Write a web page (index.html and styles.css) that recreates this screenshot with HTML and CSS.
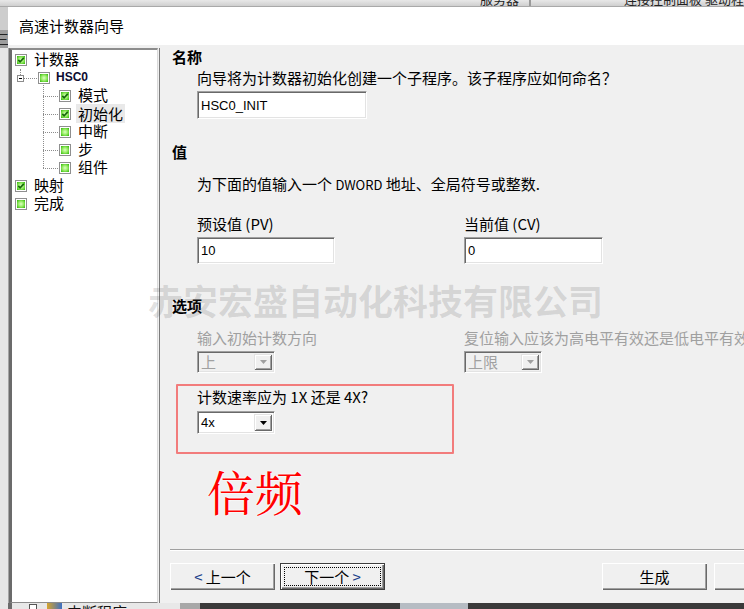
FILE: index.html
```html
<!DOCTYPE html>
<html lang="zh-CN">
<head>
<meta charset="utf-8">
<title>高速计数器向导</title>
<link rel="stylesheet" href="styles.css">
</head>
<body>
<svg class="defs" width="0" height="0" aria-hidden="true">
  <defs>
    <radialGradient id="gg" cx="50%" cy="50%" r="65%">
      <stop offset="0" stop-color="#dcffc4"/>
      <stop offset="0.5" stop-color="#98ec66"/>
      <stop offset="1" stop-color="#3cbc12"/>
    </radialGradient>
  </defs>
</svg>

<div class="topstrip">
  <span class="bgtxt t1">服务器</span>
  <span class="vsep"></span>
  <span class="bgtxt t2">连接控制面板 驱动程序</span>
</div>

<div class="main">
  <div class="leftstrip"><span class="marks">三</span></div>
  <div class="window">
    <div class="titlebar">高速计数器向导</div>
    <div class="wbody">
      <div class="tree">
        <div class="row lv0">
          <svg class="cb" viewBox="0 0 12 12"><rect x=".5" y=".5" width="11" height="11" fill="#fff" stroke="#8f8f8f"/><rect x="2" y="2" width="8" height="8" fill="url(#gg)"/><path d="M3.3 5.9 5.1 7.8 8.8 3.8" fill="none" stroke="#16690a" stroke-width="1.7"/></svg>
          <span class="lbl">计数器</span>
        </div>
        <div class="row lv1">
          <span class="minus"></span><span class="hdot"></span>
          <svg class="cb" viewBox="0 0 12 12"><rect x=".5" y=".5" width="11" height="11" fill="#fff" stroke="#8f8f8f"/><rect x="2" y="2" width="8" height="8" fill="url(#gg)"/></svg>
          <span class="lbl hsc">HSC0</span>
        </div>
        <div class="kids">
          <div class="row lv2">
            <span class="hdot"></span>
            <svg class="cb" viewBox="0 0 12 12"><rect x=".5" y=".5" width="11" height="11" fill="#fff" stroke="#8f8f8f"/><rect x="2" y="2" width="8" height="8" fill="url(#gg)"/><path d="M3.3 5.9 5.1 7.8 8.8 3.8" fill="none" stroke="#16690a" stroke-width="1.7"/></svg>
            <span class="lbl">模式</span>
          </div>
          <div class="row lv2">
            <span class="hdot"></span>
            <svg class="cb" viewBox="0 0 12 12"><rect x=".5" y=".5" width="11" height="11" fill="#fff" stroke="#8f8f8f"/><rect x="2" y="2" width="8" height="8" fill="url(#gg)"/><path d="M3.3 5.9 5.1 7.8 8.8 3.8" fill="none" stroke="#16690a" stroke-width="1.7"/></svg>
            <span class="lbl sel">初始化</span>
          </div>
          <div class="row lv2">
            <span class="hdot"></span>
            <svg class="cb" viewBox="0 0 12 12"><rect x=".5" y=".5" width="11" height="11" fill="#fff" stroke="#8f8f8f"/><rect x="2" y="2" width="8" height="8" fill="url(#gg)"/></svg>
            <span class="lbl">中断</span>
          </div>
          <div class="row lv2">
            <span class="hdot"></span>
            <svg class="cb" viewBox="0 0 12 12"><rect x=".5" y=".5" width="11" height="11" fill="#fff" stroke="#8f8f8f"/><rect x="2" y="2" width="8" height="8" fill="url(#gg)"/></svg>
            <span class="lbl">步</span>
          </div>
          <div class="row lv2">
            <span class="hdot"></span>
            <svg class="cb" viewBox="0 0 12 12"><rect x=".5" y=".5" width="11" height="11" fill="#fff" stroke="#8f8f8f"/><rect x="2" y="2" width="8" height="8" fill="url(#gg)"/></svg>
            <span class="lbl">组件</span>
          </div>
        </div>
        <div class="row lv0">
          <svg class="cb" viewBox="0 0 12 12"><rect x=".5" y=".5" width="11" height="11" fill="#fff" stroke="#8f8f8f"/><rect x="2" y="2" width="8" height="8" fill="url(#gg)"/><path d="M3.3 5.9 5.1 7.8 8.8 3.8" fill="none" stroke="#16690a" stroke-width="1.7"/></svg>
          <span class="lbl">映射</span>
        </div>
        <div class="row lv0">
          <svg class="cb" viewBox="0 0 12 12"><rect x=".5" y=".5" width="11" height="11" fill="#fff" stroke="#8f8f8f"/><rect x="2" y="2" width="8" height="8" fill="url(#gg)"/></svg>
          <span class="lbl">完成</span>
        </div>
      </div>

      <div class="content">
        <div class="pages">
          <h2 class="hd hd-name">名称</h2>
          <p class="txt txt-name">向导将为计数器初始化创建一个子程序。该子程序应如何命名？</p>
          <div class="field f-name">HSC0_INIT</div>

          <h2 class="hd hd-val">值</h2>
          <p class="txt txt-val">为下面的值输入一个 <span class="lat">DWORD</span> 地址、全局符号或整数.</p>
          <div class="pair labels"><span>预设值 (PV)</span><span>当前值 (CV)</span></div>
          <div class="pair fields"><div class="field f-pv">10</div><div class="field f-cv">0</div></div>

          <h2 class="hd hd-opt">选项</h2>
          <div class="pair labels dis"><span>输入初始计数方向</span><span>复位输入应该为高电平有效还是低电平有效</span></div>
          <div class="pair combos">
            <div class="combo disabled"><span class="val">上</span><span class="arrow"><svg width="7" height="4" viewBox="0 0 7 4"><path d="M0 0h7L3.5 4z" fill="#a0a0a0"/></svg></span></div>
            <div class="combo disabled"><span class="val">上限</span><span class="arrow"><svg width="7" height="4" viewBox="0 0 7 4"><path d="M0 0h7L3.5 4z" fill="#a0a0a0"/></svg></span></div>
          </div>

          <div class="redbox">
            <p class="q">计数速率应为 1X 还是 4X?</p>
            <div class="combo active"><span class="val">4x</span><span class="arrow"><svg width="7" height="4" viewBox="0 0 7 4"><path d="M0 0h7L3.5 4z" fill="#000"/></svg></span></div>
          </div>

          <div class="big">倍频</div>
        </div>

        <div class="footer">
          <div class="sepline"></div>
          <div class="btns">
            <div class="btn"><span class="lt">&lt;</span>&nbsp;上一个</div>
            <div class="btn def"><span class="focus">下一个&nbsp;<span class="lt">&gt;</span></span></div>
            <div class="btn b-gen">生成</div>
            <div class="btn b-last"></div>
          </div>
        </div>
      </div>
    </div>
  </div>
</div>

<div class="bottomstrip">
  <span class="ico sq"></span><span class="ico col"></span><span class="bgtxt2">中断程序</span>
</div>

<div class="watermark">赤安宏盛自动化科技有限公司</div>
</body>
</html>
```

FILE: styles.css
```css
* { box-sizing: border-box; }

html, body {
  margin: 0;
  padding: 0;
  width: 744px;
  height: 609px;
  overflow: hidden;
}

body {
  position: relative;
  font-family: "Noto Sans CJK SC", "Noto Sans", sans-serif;
  font-size: 15px;
  color: #000;
  background: #dedede;
}

.defs { position: absolute; width: 0; height: 0; }

/* ---------- background strips ---------- */
.topstrip {
  height: 7px;
  display: flex;
  align-items: flex-start;
  overflow: hidden;
  background: linear-gradient(#e8e8e8, #cfcfcf);
  border-bottom: 1px solid #a9a9a9;
}
.bgtxt {
  font-size: 13px;
  line-height: 13px;
  margin-top: -8px;
  color: #222;
  white-space: nowrap;
}
.t1 { margin-left: 480px; }
.vsep {
  width: 5px;
  height: 7px;
  margin-left: 10px;
  border-left: 1px solid #9a9a9a;
  border-right: 1px solid #9a9a9a;
}
.t2 { margin-left: 93px; }

.main { display: flex; height: 596px; }

.leftstrip {
  width: 8px;
  flex: none;
  overflow: hidden;
  background: linear-gradient(#cdcdcd 0 23px, #9d9d9d 23px 41px, #e6e6e6 41px);
}
.marks {
  display: block;
  margin-top: 24px;
  margin-left: -4px;
  font-size: 13px;
  line-height: 16px;
  color: #222;
}

.bottomstrip {
  height: 6px;
  display: flex;
  align-items: flex-start;
  overflow: hidden;
  background: linear-gradient(90deg, #e6e6e6 0 8px, #6b6b6b 8px 12px, #e8e8e8 12px 180px, #a8a8a8 180px 200px, #3a3a3a 200px 400px, #b6bcc3 400px 468px, #3a3a3a 468px);
}
.ico { display: block; flex: none; }
.sq { width: 8px; height: 8px; margin: 1px 0 0 29px; border: 1px solid #555; background: #fff; }
.col { width: 15px; height: 8px; margin: 0 0 0 10px; background: linear-gradient(90deg, #d7a42c, #3d6fc2); }
.bgtxt2 { font-size: 15px; line-height: 15px; margin: 1px 0 0 5px; white-space: nowrap; color: #111; }

/* ---------- window ---------- */
.window {
  width: 820px;
  flex: none;
  display: flex;
  flex-direction: column;
}
.titlebar {
  height: 38px;
  line-height: 38px;
  padding-left: 11px;
  background: #fff;
  font-size: 15px;
  white-space: nowrap;
}
.wbody {
  flex: 1;
  display: flex;
  background: #f0f0f0;
}

/* ---------- tree ---------- */
.tree {
  width: 149px;
  flex: none;
  margin: 3px 0 0 1px;
  background: #fff;
  border-left: 3px solid #6b6b6b;
  border-top: 2px solid #8c8c8c;
  border-bottom: 1px solid #8c8c8c;
  border-right: 1px solid #dadada;
  box-shadow: -1px 0 0 #a5a5a5, 1px 0 0 #f0f0f0, 2px 0 0 #7c7c7c;
}
.row {
  height: 18px;
  display: flex;
  align-items: center;
}
.cb { width: 12px; height: 12px; flex: none; margin-top: 2px; }
.lbl { line-height: 18px; white-space: nowrap; }

.lv0 { padding-left: 3px; }
.lv0 .cb { margin-right: 7px; }

.lv1 { padding-left: 5px; }
.minus {
  position: relative;
  width: 7px;
  height: 7px;
  flex: none;
  margin-top: 2px;
  border: 1px solid #8c8c8c;
  background: #fff;
}
.minus::after {
  content: "";
  position: absolute;
  left: 1px;
  top: 2px;
  width: 3px;
  height: 1px;
  background: #000;
}
.minus::before {
  content: "";
  position: absolute;
  left: 2px;
  top: -7px;
  height: 6px;
  border-left: 1px dotted #8c8c8c;
}
.hdot { height: 0; flex: none; margin-top: 2px; border-top: 1px dotted #8c8c8c; }
.lv1 .hdot { width: 13px; margin-right: 1px; }
.lv1 .cb { margin-right: 6px; }
.hsc {
  font-family: "Liberation Sans", Arial, sans-serif;
  font-weight: 700;
  font-size: 12px;
  color: #0b0b30;
}

.kids { position: relative; }
.kids::before {
  content: "";
  position: absolute;
  left: 31px;
  top: -3px;
  bottom: 8px;
  border-left: 1px dotted #8c8c8c;
}
.lv2 { padding-left: 31px; }
.lv2 .hdot { width: 15px; margin-right: 1px; }
.lv2 .cb { margin-right: 7px; }
.sel {
  background: #e9e9e9;
  margin-left: -2px;
  padding: 0 2px;
  line-height: 19px;
}

/* ---------- content ---------- */
.content {
  flex: 1;
  display: flex;
  flex-direction: column;
  padding-left: 12px;
}
.pages { flex: 1; }

.hd {
  margin: 0 0 0 2px;
  font-size: 15px;
  font-weight: 700;
  line-height: 18px;
}
.hd-name { margin-top: 3px; }
.hd-val { margin-top: 24px; }
.hd-opt { margin-top: 33px; }

.txt {
  margin: 0 0 0 27px;
  line-height: 18px;
  white-space: nowrap;
}
.txt-name { margin-top: 3px; }
.txt-val { margin-top: 14px; }
.lat { font-size: 13px; }

.field {
  display: flex;
  align-items: center;
  padding: 0 3px;
  background: #fff;
  border: 1px solid;
  border-color: #a0a0a0 #fff #fff #a0a0a0;
  box-shadow: inset 1px 1px 0 #696969, inset -1px -1px 0 #e3e3e3;
  font-family: "Liberation Sans", Arial, sans-serif;
  font-size: 13px;
}
.f-name { width: 170px; height: 28px; margin: 4px 0 0 27px; }
.f-pv { width: 138px; height: 27px; }
.f-cv { width: 139px; height: 27px; }

.pair {
  display: grid;
  grid-template-columns: 267px auto;
  margin-left: 27px;
  white-space: nowrap;
}
.labels { line-height: 18px; }
.pair.labels { margin-top: 21px; }
.pair.fields { margin-top: 4px; }
.pair.labels.dis { margin-top: 14px; color: #a0a0a0; }
.pair.combos { margin-top: 4px; }

.combo {
  width: 78px;
  height: 22px;
  display: flex;
  padding: 2px;
  border: 1px solid;
  border-color: #a0a0a0 #fff #fff #a0a0a0;
  box-shadow: inset 1px 1px 0 #696969, inset -1px -1px 0 #e3e3e3;
  background: #fff;
}
.combo .val {
  flex: 1;
  padding-left: 1px;
  line-height: 16px;
  font-size: 15px;
}
.combo .arrow {
  width: 18px;
  flex: none;
  display: flex;
  align-items: center;
  justify-content: center;
  background: #f0f0f0;
  box-shadow: inset 1px 1px 0 #e3e3e3, inset -1px -1px 0 #696969, inset 2px 2px 0 #fff, inset -2px -2px 0 #a0a0a0;
}
.combo.disabled { background: #f0f0f0; }
.combo.disabled .val { color: #a0a0a0; }
.combo.active .val {
  font-family: "Liberation Sans", Arial, sans-serif;
  font-size: 13px;
  line-height: 17px;
}

.redbox {
  width: 278px;
  height: 70px;
  margin: 11px 0 0 6px;
  padding: 2px 0 0 19px;
  border: 2px solid #f27c7c;
  border-radius: 1px;
}
.q { margin: 0; line-height: 18px; white-space: nowrap; }
.redbox .combo { margin-top: 5px; height: 23px; }

.big {
  margin: 9px 0 0 37px;
  font-family: "Noto Serif CJK SC", "Noto Sans CJK SC", serif;
  font-size: 48px;
  line-height: 56px;
  color: #ff0000;
  text-shadow: 0 0 2px #fff, 0 0 2px #fff, 0 0 1px #fff;
}

/* ---------- footer ---------- */
.footer { padding-bottom: 13px; }
.sepline {
  height: 2px;
  border-top: 1px solid #a0a0a0;
  border-bottom: 1px solid #fff;
}
.btns { display: flex; margin-top: 12px; }
.btn {
  width: 105px;
  height: 27px;
  flex: none;
  display: flex;
  align-items: center;
  justify-content: center;
  background: #f0f0f0;
  box-shadow: inset 1px 1px 0 #fff, inset -1px -1px 0 #696969, inset -2px -2px 0 #a0a0a0;
  font-size: 15px;
  line-height: 18px;
  white-space: nowrap;
}
.btn + .btn { margin-left: 5px; }
.lt { color: #1b3f8a; }
.btn.def {
  padding: 3px;
  border: 1px solid #3c3c3c;
  box-shadow: inset 1px 1px 0 #fff, inset -1px -1px 0 #696969, inset -2px -2px 0 #a0a0a0;
}
.focus {
  flex: 1;
  align-self: stretch;
  display: flex;
  align-items: center;
  justify-content: center;
  border: 1px dotted #000;
}
.btn.b-gen { margin-left: 217px; }
.btn.b-last { margin-left: 7px; }

/* ---------- watermark overlay ---------- */
.watermark {
  position: absolute;
  left: 148px;
  top: 280px;
  font-size: 35px;
  line-height: 40px;
  font-weight: 700;
  white-space: nowrap;
  color: rgba(70, 70, 70, 0.16);
  pointer-events: none;
}
```
